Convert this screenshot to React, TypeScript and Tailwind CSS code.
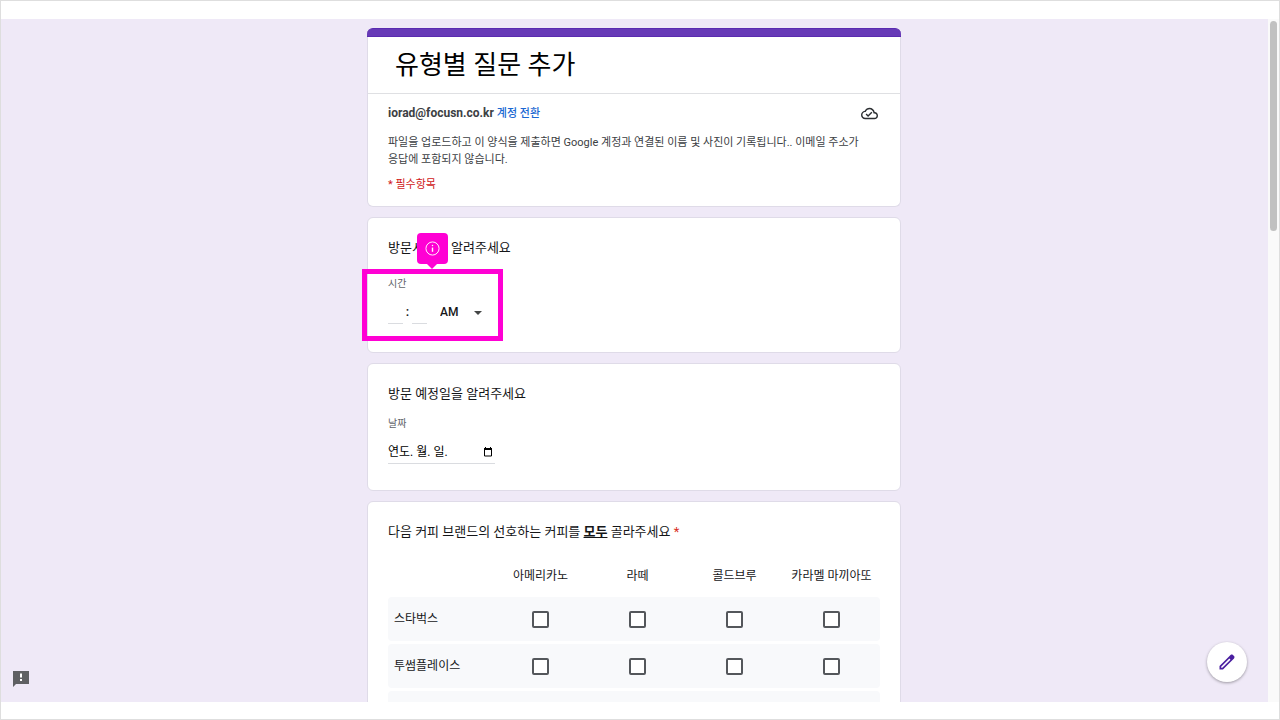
import { useState } from "react";
import type { ReactNode } from "react";

const drinks = ["아메리카노", "라떼", "콜드브루", "카라멜 마끼아또"];
const brands = ["스타벅스", "투썸플레이스", ""];

function Card({ children }: { children: ReactNode }) {
    return (
        <section className="relative rounded-md border border-[#dfdbe8] bg-white px-5">
            {children}
        </section>
    );
}

function CloudDoneIcon() {
    return (
        <svg viewBox="0 0 24 24" className="mr-0.5 h-[17px] w-[17px]" fill="#2b2e31" aria-hidden="true">
            <path d="M19.35 10.04C18.67 6.59 15.64 4 12 4 9.11 4 6.6 5.64 5.35 8.04 2.34 8.36 0 10.91 0 14c0 3.31 2.69 6 6 6h13c2.76 0 5-2.24 5-5 0-2.64-2.05-4.78-4.65-4.96zM19 18H6c-2.21 0-4-1.79-4-4 0-2.05 1.53-3.76 3.56-3.97l1.07-.11.5-.95C8.08 7.14 9.94 6 12 6c2.62 0 4.88 1.86 5.39 4.43l.3 1.5 1.53.11c1.56.1 2.78 1.41 2.78 2.96 0 1.65-1.35 3-3 3zm-9-3.82l-2.09-2.09L6.5 13.5 10 17l6.01-6.01-1.41-1.41z" />
        </svg>
    );
}

function FormHeader() {
    return (
        <section className="rounded-md border border-[#dfdbe8] border-t-0 bg-white">
            <div className="-mx-px h-[9px] rounded-t-md border-y border-[#5a2bb0] bg-[#673ab7]" />
            <h1 className="border-b border-[#dfe0e3] px-[27px] py-2.5 text-[26px] leading-9 text-black">
                유형별 질문 추가
            </h1>
            <div className="px-5 pt-2.5 pb-3 text-[#3c4043]">
                <div className="flex items-center justify-between text-[12px] leading-[18px]">
                    <p>
                        <strong className="font-bold">iorad@focusn.co.kr</strong>{" "}
                        <a href="#switch" className="text-[11px] font-medium text-[#1967d2]">계정 전환</a>
                    </p>
                    <CloudDoneIcon />
                </div>
                <p className="mt-[11px] text-[11px] leading-[17px] break-keep">
                    파일을 업로드하고 이 양식을 제출하면 Google 계정과 연결된 이름 및 사진이 기록됩니다.. 이메일 주소가 응답에 포함되지 않습니다.
                </p>
                <p className="mt-2 text-[11px] leading-[18px] text-[#d01818]">* 필수항목</p>
            </div>
        </section>
    );
}

function TimeQuestion() {
    return (
        <Card>
            <div className="pt-5 pb-7">
                <h2 className="text-[13px] leading-5">방문시간을 알려주세요</h2>
                <p className="mt-[18px] text-[10px] leading-4 text-[#5f6368]">시간</p>
                <div className="mt-2 flex h-6 items-end">
                    <input aria-label="시" className="h-6 w-[15px] border-b border-[#dadce0] text-[12px] outline-none" />
                    <span className="w-[9px] text-center text-[13px] leading-6 font-medium">:</span>
                    <input aria-label="분" className="h-6 w-[15px] border-b border-[#dadce0] text-[12px] outline-none" />
                    <div className="relative ml-[13px]">
                        <select aria-label="오전 또는 오후" className="block h-6 w-[45px] appearance-none bg-transparent text-[12px] font-medium outline-none">
                            <option>AM</option>
                            <option>PM</option>
                        </select>
                        <svg viewBox="0 0 8 4" className="pointer-events-none absolute top-[11px] right-[3px] h-1 w-2" fill="#444746" aria-hidden="true">
                            <path d="M0 0h8L4 4z" />
                        </svg>
                    </div>
                </div>
            </div>
            <div className="pointer-events-none absolute top-[51px] -left-1.5 h-[72px] w-[141px] border-[5px] border-[#ff00d4]" />
            <div className="absolute top-[15px] left-[49px] flex h-[31px] w-[31px] items-center justify-center rounded bg-[#ff00d4]">
                <svg viewBox="0 0 16 16" className="h-[15px] w-[15px]" fill="none" stroke="#fff" aria-hidden="true">
                    <circle cx="8" cy="8" r="7" />
                    <path d="M8 7v4.5" strokeWidth="1.5" />
                    <circle cx="8" cy="4.8" r=".8" fill="#fff" stroke="none" />
                </svg>
                <svg viewBox="0 0 10 5" className="absolute top-full left-2.5 h-[5px] w-2.5" fill="#ff00d4" aria-hidden="true">
                    <path d="M0 0h10L5 5z" />
                </svg>
            </div>
        </Card>
    );
}

function DateQuestion() {
    return (
        <Card>
            <div className="pt-5 pb-[26px]">
                <h2 className="text-[13px] leading-5">방문 예정일을 알려주세요</h2>
                <label htmlFor="visit-date" className="mt-3 block text-[10px] leading-4 text-[#5f6368]">날짜</label>
                <div className="mt-2 flex h-6 w-[107px] items-center border-b border-[#dadce0]">
                    <input id="visit-date" placeholder="연도. 월. 일." className="w-0 flex-1 text-[12px] outline-none placeholder:text-black" />
                    <button aria-label="달력 열기" className="mr-0.5">
                        <svg viewBox="0 0 10 10" className="h-2.5 w-2.5" aria-hidden="true">
                            <path d="M1.5 2h7v7h-7z" fill="none" stroke="#000" />
                            <path d="M1 1h1V0h1v1h4V0h1v1h1v2H1z" fill="#000" />
                        </svg>
                    </button>
                </div>
            </div>
        </Card>
    );
}

function CoffeeQuestion() {
    const [picked, setPicked] = useState<string[]>([]);

    const toggle = (key: string) => {
        setPicked(picked.includes(key) ? picked.filter((k) => k !== key) : [...picked, key]);
    };

    return (
        <Card>
            <h2 className="pt-5 text-[13px] leading-5">
                다음 커피 브랜드의 선호하는 커피를 <strong className="font-bold underline">모두</strong> 골라주세요{" "}
                <span className="text-[#d93025]">*</span>
            </h2>
            <table className="mt-3 w-full table-fixed border-separate border-spacing-x-0 border-spacing-y-[3px] text-[12px]">
                <thead>
                    <tr className="h-[37px]">
                        <td className="w-[104px]" />
                        {drinks.map((drink) => (
                            <th key={drink} scope="col" className="font-normal">{drink}</th>
                        ))}
                    </tr>
                </thead>
                <tbody>
                    {brands.map((brand) => (
                        <tr key={brand} className="h-11 bg-[#f8f9fb]">
                            <th scope="row" className="rounded-l px-1.5 text-left font-normal">{brand}</th>
                            {drinks.map((drink) => {
                                const key = `${brand}-${drink}`;
                                return (
                                    <td key={drink} className="text-center last:rounded-r">
                                        <input
                                            type="checkbox"
                                            aria-label={`${brand} ${drink}`}
                                            checked={picked.includes(key)}
                                            onChange={() => toggle(key)}
                                            className="mx-auto block h-[17px] w-[17px] appearance-none rounded-[2px] border-2 border-[#54575b] bg-white checked:bg-[#673ab7]"
                                        />
                                    </td>
                                );
                            })}
                        </tr>
                    ))}
                </tbody>
            </table>
        </Card>
    );
}

export default function App() {
    return (
        <div className="flex h-screen flex-col border border-[#dedede] bg-white pt-[18px] pb-[17px] font-[Roboto,'Noto_Sans_CJK_KR',sans-serif] text-[#151618]">
            <div className="relative flex min-h-0 flex-1">
                <main className="flex-1 overflow-hidden bg-[#efe9f7] pr-px">
                    <div className="mx-auto flex w-full max-w-[534px] flex-col gap-2.5 pt-[9px]">
                        <FormHeader />
                        <TimeQuestion />
                        <DateQuestion />
                        <CoffeeQuestion />
                    </div>
                </main>
                <div className="w-[11px] bg-[#fafafa] px-0.5 pt-0.5">
                    <div className="h-[210px] rounded-full bg-[#c1c1c1]" />
                </div>
                <button aria-label="문제 신고" className="absolute bottom-3.5 left-[11px]">
                    <svg viewBox="0 0 18 18" className="h-[18px] w-[18px]" aria-hidden="true">
                        <path d="M1 1h16v13H4l-3 3z" fill="#5f6063" />
                        <path d="M8 3.5h2v4H8zM8 9h2v2H8z" fill="#fff" />
                    </svg>
                </button>
                <button aria-label="양식 수정" className="absolute right-8 bottom-5 flex h-10 w-10 items-center justify-center rounded-full bg-white shadow-[0_1px_3px_rgba(0,0,0,0.35)]">
                    <svg viewBox="0 0 24 24" className="h-5 w-5" fill="#4a1fa0" aria-hidden="true">
                        <path d="M20.41 4.94l-1.35-1.35c-.78-.78-2.05-.78-2.83 0L3 16.82V21h4.18L20.41 7.77c.79-.78.79-2.05 0-2.83zM6.35 19H5v-1.35l9.81-9.81 1.35 1.35L6.35 19z" />
                    </svg>
                </button>
            </div>
        </div>
    );
}
